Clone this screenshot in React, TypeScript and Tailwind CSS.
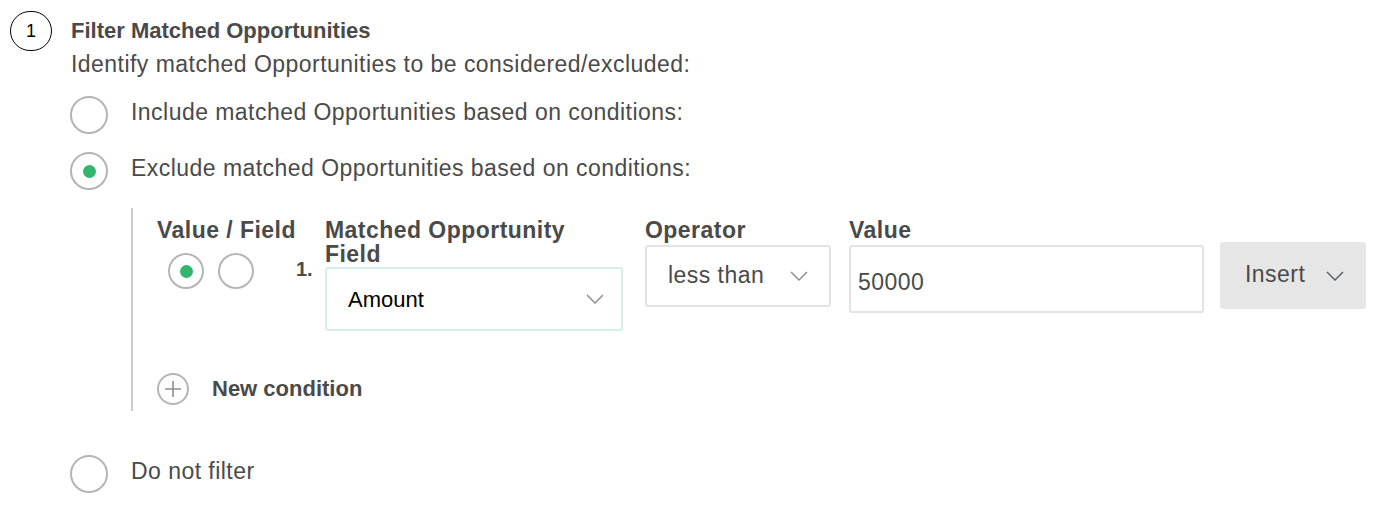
const font = { fontFamily: '"Liberation Sans", Arial, sans-serif' };

const Radio = ({ checked, size = 38 }: { checked?: boolean; size?: number }) => (
  <span
    className="flex shrink-0 items-center justify-center rounded-full border-2 border-[#b5b5b5] bg-white"
    style={{ width: size, height: size }}
  >
    {checked && <span className="h-[13px] w-[13px] rounded-full bg-[#34b56f]" />}
  </span>
);

const Chevron = ({ color = "#8a9199" }: { color?: string }) => (
  <svg width="18" height="10" viewBox="0 0 18 10" fill="none">
    <path d="M1 1l8 8 8-8" stroke={color} strokeWidth="1.5" />
  </svg>
);

export default function App() {
  return (
    <div className="flex bg-white pl-[10px] pt-[11px] text-[#4a4a4a]" style={font}>
      <div className="flex h-[40px] w-[42px] shrink-0 items-center justify-center rounded-full border-[1.5px] border-black text-[18px] text-black">
        1
      </div>
      <div className="ml-[19px] pt-[8px]">
        <h2 className="text-[22px] font-bold leading-[24px]">Filter Matched Opportunities</h2>
        <p className="mt-[7px] text-[23px] leading-[28px] tracking-[0.02em]">
          Identify matched Opportunities to be considered/excluded:
        </p>

        <div className="-ml-px mt-[18px] flex items-center">
          <Radio />
          <span className="ml-[23px] -mt-[6px] text-[23px] leading-[28px] tracking-[0.02em]">
            Include matched Opportunities based on conditions:
          </span>
        </div>
        <div className="-ml-px mt-[18px] flex items-center">
          <Radio checked />
          <span className="ml-[23px] -mt-[6px] text-[23px] leading-[28px] tracking-[0.02em]">
            Exclude matched Opportunities based on conditions:
          </span>
        </div>

        <div className="ml-[60px] mt-[18px] border-l-2 border-[#cccccc] pb-[6px] pl-[24px] pt-[10px]">
          <div className="flex items-start">
            <div className="w-[168px] shrink-0">
              <div className="text-[23px] font-bold leading-[24px] tracking-[0.02em]">Value / Field</div>
              <div className="mt-[11px] flex items-start">
                <div className="ml-[11px] flex gap-[14px]">
                  <Radio checked size={36} />
                  <Radio size={36} />
                </div>
                <span className="ml-[42px] mt-[4px] text-[20px] font-bold leading-[24px]">1.</span>
              </div>
            </div>
            <div className="w-[298px] shrink-0">
              <div className="w-[270px] text-[23px] font-bold leading-[24px] tracking-[0.02em]">
                Matched Opportunity Field
              </div>
              <div className="mt-[1px] flex h-[64px] items-center justify-between rounded-[3px] border-2 border-[#d4efe3] pl-[21px] pr-[17px]">
                <span className="text-[22px] text-black">Amount</span>
                <Chevron />
              </div>
            </div>
            <div className="ml-[22px] w-[186px] shrink-0">
              <div className="text-[23px] font-bold leading-[24px] tracking-[0.02em]">Operator</div>
              <div className="mt-[3px] flex h-[62px] items-center justify-between rounded-[3px] border-2 border-[#e3e3e3] pl-[21px] pr-[21px]">
                <span className="-mt-[2px] text-[23px] tracking-[0.02em]">less than</span>
                <Chevron />
              </div>
            </div>
            <div className="ml-[18px] w-[355px] shrink-0">
              <div className="text-[23px] font-bold leading-[24px] tracking-[0.02em]">Value</div>
              <div className="mt-[3px] flex h-[68px] items-center rounded-[3px] border-2 border-[#e3e3e3] pl-[7px]">
                <span className="mt-[6px] text-[23px] tracking-[0.02em]">50000</span>
              </div>
            </div>
            <div className="ml-[16px] mt-[24px] flex h-[67px] w-[146px] items-center justify-between rounded-[3px] bg-[#e6e6e6] pl-[25px] pr-[22px]">
              <span className="-mt-[2px] text-[23px] tracking-[0.02em]">Insert</span>
              <Chevron color="#5f6366" />
            </div>
          </div>

          <div className="mt-[41px] flex items-center">
            <span className="flex h-[32px] w-[32px] items-center justify-center rounded-full border-2 border-[#b5b5b5]">
              <svg width="18" height="18" viewBox="0 0 18 18">
                <path d="M9 1v16M1 9h16" stroke="#8a8f94" strokeWidth="1.6" />
              </svg>
            </span>
            <span className="ml-[23px] text-[22px] font-bold">New condition</span>
          </div>
        </div>

        <div className="-ml-px mt-[44px] flex items-center">
          <Radio />
          <span className="ml-[23px] -mt-[6px] text-[23px] leading-[28px] tracking-[0.02em]">Do not filter</span>
        </div>
      </div>
    </div>
  );
}
